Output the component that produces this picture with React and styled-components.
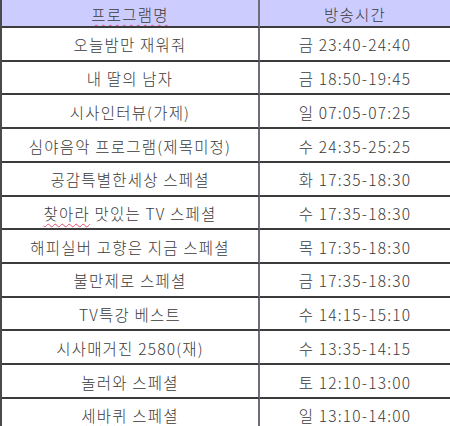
import React from 'react'
import styled, { createGlobalStyle } from 'styled-components'

const schedule = [
    { name: '오늘밤만 재워줘', time: '금 23:40-24:40' },
    { name: '내 딸의 남자', time: '금 18:50-19:45' },
    { name: '시사인터뷰(가제)', time: '일 07:05-07:25' },
    { name: '심야음악 프로그램(제목미정)', time: '수 24:35-25:25' },
    { name: '공감특별한세상 스페셜', time: '화 17:35-18:30' },
    { name: ['찾아라', ' 맛있는 TV 스페셜'], time: '수 17:35-18:30' },
    { name: '해피실버 고향은 지금 스페셜', time: '목 17:35-18:30' },
    { name: '불만제로 스페셜', time: '금 17:35-18:30' },
    { name: 'TV특강 베스트', time: '수 14:15-15:10' },
    { name: '시사매거진 2580(재)', time: '수 13:35-14:15' },
    { name: '놀러와 스페셜', time: '토 12:10-13:00' },
    { name: ['세바퀴', ' 스페셜'], time: '일 13:10-14:00' },
]

const GlobalStyle = createGlobalStyle`
    html, body {
        margin: 0;
        padding: 0;
        background: #ffffff;
        overflow: hidden;
    }
    body {
        font-family: "Noto Sans CJK KR", "Noto Sans", sans-serif;
    }
`

function App() {
    // 맞춤법 밑줄이 있는 이름은 배열로 나눠서 렌더링
    const renderName = (name) => {
        if (Array.isArray(name)) {
            return (
                <Label>
                    <Misspelled>{name[0]}</Misspelled>
                    {name[1]}
                </Label>
            )
        }
        return <Label>{name}</Label>
    }

    return (
        <>
            <GlobalStyle />
            <Table>
                <HeadCell first>
                    <Label>
                        <Misspelled>프로그램명</Misspelled>
                    </Label>
                </HeadCell>
                <HeadCell>
                    <Label>방송시간</Label>
                </HeadCell>
                {schedule.map((item, i) => (
                    <React.Fragment key={i}>
                        <Cell first>{renderName(item.name)}</Cell>
                        <Cell>
                            <Label>{item.time}</Label>
                        </Cell>
                    </React.Fragment>
                ))}
            </Table>
        </>
    )
}

export default App

const Table = styled.div`
    display: grid;
    grid-template-columns: 258px 190px;
    grid-template-rows: 28px repeat(12, 33.73px);
    width: 450px;
    border-left: 2px solid #4a4a4a;
    box-sizing: border-box;
`

const BaseCell = styled.div`
    display: flex;
    align-items: center;
    justify-content: center;
    box-sizing: border-box;
    border-bottom: 2px solid #3c3c3c;
    border-right: ${(p) => (p.first ? '2px solid #6e6e78' : 'none')};
    color: #3a3a3a;
    font-size: 15.5px;
    font-weight: 300;
    letter-spacing: 1.2px;
    white-space: pre;
    overflow: hidden;
`

const HeadCell = styled(BaseCell)`
    background: #ccccff;
    padding-top: 1px;
`

const Cell = styled(BaseCell)`
    background: #ffffff;
    padding-top: 1px;
`

const Label = styled.span`
    display: inline-block;
`

const Misspelled = styled.span`
    text-decoration: underline wavy #e0506a;
    text-decoration-thickness: 1px;
    text-underline-offset: 3px;
`
